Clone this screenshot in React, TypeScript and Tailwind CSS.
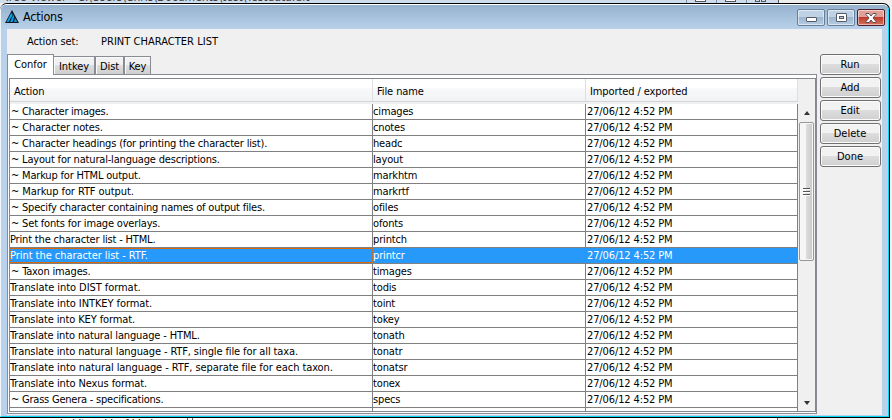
import type { ReactNode } from "react";

type Row = { action: string; file: string; tracking: string };

const rows: Row[] = [
  { action: "~ Character images.", file: "cimages", tracking: "pl-px tracking-[-0.28px]" },
  { action: "~ Character notes.", file: "cnotes", tracking: "pl-px tracking-[-0.12px]" },
  { action: "~ Character headings (for printing the character list).", file: "headc", tracking: "pl-px tracking-[-0.17px]" },
  { action: "~ Layout for natural-language descriptions.", file: "layout", tracking: "pl-px tracking-[-0.18px]" },
  { action: "~ Markup for HTML output.", file: "markhtm", tracking: "pl-px tracking-[-0.19px]" },
  { action: "~ Markup for RTF output.", file: "markrtf", tracking: "pl-px tracking-[-0.08px]" },
  { action: "~ Specify character containing names of output files.", file: "ofiles", tracking: "pl-px tracking-[-0.2px]" },
  { action: "~ Set fonts for image overlays.", file: "ofonts", tracking: "pl-px tracking-[-0.17px]" },
  { action: "Print the character list - HTML.", file: "printch", tracking: "tracking-[-0.17px]" },
  { action: "Print the character list - RTF.", file: "printcr", tracking: "tracking-[-0.05px]" },
  { action: "~ Taxon images.", file: "timages", tracking: "pl-px tracking-[-0.15px]" },
  { action: "Translate into DIST format.", file: "todis", tracking: "tracking-[-0.06px]" },
  { action: "Translate into INTKEY format.", file: "toint", tracking: "tracking-[-0.08px]" },
  { action: "Translate into KEY format.", file: "tokey", tracking: "tracking-[-0.12px]" },
  { action: "Translate into natural language - HTML.", file: "tonath", tracking: "tracking-[-0.14px]" },
  { action: "Translate into natural language - RTF, single file for all taxa.", file: "tonatr", tracking: "tracking-[-0.12px]" },
  { action: "Translate into natural language - RTF, separate file for each taxon.", file: "tonatsr", tracking: "tracking-[-0.08px]" },
  { action: "Translate into Nexus format.", file: "tonex", tracking: "tracking-[-0.1px]" },
  { action: "~ Grass Genera - specifications.", file: "specs", tracking: "pl-px tracking-[-0.22px]" },
  { action: "~ Grass Genera - character list.", file: "chars", tracking: "pl-px tracking-[-0.2px]" },
];

const selected = 9;

function WindowButton({ close, children }: { close?: boolean; children: ReactNode }) {
  return (
    <div
      className={
        "flex h-[17px] w-7 items-center justify-center rounded-[2px] border shadow-[inset_0_0_0_1px_rgba(255,255,255,0.5)] " +
        (close
          ? "border-[#51202a] bg-linear-to-b from-[#e0a098] from-45% via-[#c13a2b] via-50% to-[#d5705c]"
          : "border-[#687f98] bg-linear-to-b from-[#bfd2e5] from-45% via-[#9db6cf] via-50% to-[#b4cde4]")
      }
    >
      {children}
    </div>
  );
}

function Tab({ label, width }: { label: string; width: string }) {
  return (
    <div
      className={
        "flex h-[18px] items-center justify-center border border-b-0 border-[#898c95] bg-linear-to-b from-[#f1f1f1] from-45% via-[#dedede] via-50% to-[#cfcfcf] pt-px shadow-[inset_1px_1px_0_#fafafa] " +
        width
      }
    >
      {label}
    </div>
  );
}

function PushButton({ label }: { label: string }) {
  return (
    <div className="flex h-[21px] w-[61px] items-center justify-center rounded-[3px] border border-[#707070] bg-linear-to-b from-[#f2f2f2] from-45% via-[#dddddd] via-50% to-[#cfcfcf] pr-px pb-px shadow-[inset_0_0_0_1px_#fbfbfb]">
      {label}
    </div>
  );
}

export default function App() {
  return (
    <div className="flex h-[420px] w-[892px] flex-col overflow-hidden bg-[#f0f0f0] font-['DejaVu_Sans_Condensed','DejaVu_Sans',sans-serif] text-[11px] leading-[15px] whitespace-pre text-black [font-stretch:condensed]">
      {/* Strip of the window behind */}
      <div className="flex h-[3px] shrink-0 overflow-hidden bg-[#eeeeee]">
        <div className="flex h-[3px] w-[779px] overflow-hidden border-r border-[#555] bg-[#cfdcec]">
          <div className="-mt-[10px] ml-1 w-[682px] text-[12px] leading-[14px] text-[#444]">
            Tree Viewer - C:\Users\Chris\Documents\test\Testdata.dlt
          </div>
          <div className="flex gap-[2px]">
            <div className="flex w-7 justify-center border-l border-[#8796aa]"><div className="h-[2px] w-[11px] border border-t-0 border-[#555] bg-white" /></div>
            <div className="flex w-7 justify-center border-l border-[#8796aa]"><div className="h-[2px] w-[11px] border border-t-0 border-[#555] bg-white" /></div>
            <div className="flex w-7 justify-center gap-px border-l border-[#8796aa]"><div className="h-[2px] w-[5px] border border-t-0 border-[#555]" /><div className="h-[2px] w-[5px] border border-t-0 border-[#555]" /></div>
          </div>
        </div>
      </div>

      {/* Actions window */}
      <div className="flex h-[415px] w-[890px] shrink-0 flex-col overflow-hidden rounded-t-[7px] border-t border-r border-b border-black bg-[#b9d1ea]">
        <div className="flex h-[413px] flex-col overflow-hidden rounded-t-[6px] border-t border-r border-b border-l border-t-white border-r-[#00d8f4] border-b-[#00d8f4] border-l-[#f2f7fc]">
          <div className="flex h-6 shrink-0 bg-linear-to-b from-[#95b2ce] to-[#b9d1ea] pl-1">
            <svg width="14" height="14" viewBox="0 0 14 14" className="mt-[5px]">
              <path d="M7 0L14 13H0Z" fill="#101820" />
              <path d="M6.2 3L7.8 5L3.5 12H1.5Z" fill="#08a0e8" />
              <path d="M8.3 5L9.2 7L7.5 12H5Z" fill="#08a0e8" />
              <path d="M10 8L12.3 12H9Z" fill="#168fd0" />
            </svg>
            <span className="mt-1 ml-1 w-[774px] text-[12.5px] leading-4 tracking-[-0.2px]">Actions</span>
            <div className="mt-1 flex gap-[2px]">
              <WindowButton>
                <div className="mt-[3px] h-[5px] w-[11px] rounded-[1px] border border-[#555b66] bg-white" />
              </WindowButton>
              <WindowButton>
                <div className="flex h-[9px] w-[11px] items-center justify-center rounded-[1px] border border-[#555b66] bg-white">
                  <div className="h-[3px] w-[5px] border border-[#555b66] bg-[#b4cde4]" />
                </div>
              </WindowButton>
              <WindowButton close>
                <svg width="12" height="10" viewBox="0 0 12 10">
                  <path d="M1 .5H4L6 3L8 .5H11V1.5L8 5L11 8.5V9.5H8L6 7L4 9.5H1V8.5L4 5L1 1.5Z" fill="white" stroke="#594c55" />
                </svg>
              </WindowButton>
            </div>
          </div>

          <div className="mr-[6px] ml-[6px] flex h-[386px] shrink-0 bg-[#f0f0f0]">
            <div className="flex w-[810px] flex-col">
              <div className="flex h-[25px] shrink-0 items-start pt-[5px] pl-5">
                <span className="w-[74px] tracking-[-0.1px]">Action set:</span>
                <span className="tracking-[0.03px]">PRINT CHARACTER LIST</span>
              </div>

              <div className="z-10 flex h-5 shrink-0 items-end tracking-[-0.05px]">
                <div className="-mb-px flex h-[21px] w-[47px] items-center justify-center border border-b-0 border-[#898c95] bg-white pb-px">
                  Confor
                </div>
                <div className="flex h-[18px]">
                  <Tab label="Intkey" width="w-[41px] border-l-0" />
                  <Tab label="Dist" width="w-[29px]" />
                  <Tab label="Key" width="w-[27px]" />
                </div>
              </div>

              <div className="h-[340px] shrink-0 border border-[#898c95] bg-white pt-[3px] pb-px pl-px">
                <div className="flex h-[334px] border border-[#828790] bg-white">
                  <div className="flex w-[788px] shrink-0 flex-col overflow-hidden">
                    <div className="flex h-[23px] shrink-0 items-center border-b border-[#d5d5d5] bg-linear-to-b from-white from-40% via-[#f7f8fa] via-45% to-[#f1f2f4] tracking-[-0.1px]">
                      <div className="h-[22px] w-[363px] border-r border-[#dedfe1] pt-[5px] pl-1">Action</div>
                      <div className="h-[22px] w-[213px] border-r border-[#dedfe1] pt-[5px] pl-1">File name</div>
                      <div className="h-[22px] w-[212px] border-r border-[#dedfe1] pt-[5px] pl-1">Imported / exported</div>
                    </div>
                    <div className="h-[2px] shrink-0 bg-[#f0f0f0]" />
                    {rows.map((row, i) => (
                      <div
                        key={row.file}
                        className={
                          "flex h-4 shrink-0 border-b border-[#808080] " +
                          (i === selected ? "bg-[#2699fb] text-white" : "bg-white")
                        }
                      >
                        <div
                          className={
                            "h-[15px] w-[363px] border-r border-[#808080] " +
                            row.tracking +
                            (i === selected ? " outline-1 -outline-offset-1 outline-dotted outline-[#d96604]" : "")
                          }
                        >
                          {row.action}
                        </div>
                        <div className="w-[213px] border-r border-[#808080] tracking-[-0.15px]">{row.file}</div>
                        <div className="w-[212px] border-r border-[#808080] pl-px tracking-[-0.12px]">27/06/12 4:52 PM</div>
                      </div>
                    ))}
                  </div>
                  <div className="flex w-[17px] flex-col bg-[#f0f0f0]">
                    <div className="h-[25px]" />
                    <div className="flex h-[18px] items-center justify-center">
                      <div className="h-0 w-0 border-x-[3.5px] border-b-4 border-x-transparent border-b-[#333]" />
                    </div>
                    <div className="ml-px flex h-[139px] w-[15px] items-center justify-center rounded-[2px] border border-[#979797] bg-linear-to-r from-[#f5f5f5] from-45% via-[#dcdcdc] via-50% to-[#c8c8c8] shadow-[inset_0_0_0_1px_#f8f8f8]">
                      <div className="flex flex-col gap-px">
                        <div className="h-[2px] w-[7px] border-b border-white bg-[#555]" />
                        <div className="h-[2px] w-[7px] border-b border-white bg-[#555]" />
                        <div className="h-[2px] w-[7px] border-b border-white bg-[#555]" />
                      </div>
                    </div>
                    <div className="flex-1" />
                    <div className="flex h-[17px] items-center justify-center">
                      <div className="h-0 w-0 border-x-[3.5px] border-t-4 border-x-transparent border-t-[#333]" />
                    </div>
                  </div>
                </div>
              </div>
            </div>

            <div className="ml-[3px] flex flex-col gap-[2px] pt-[25px]">
              <PushButton label="Run" />
              <PushButton label="Add" />
              <PushButton label="Edit" />
              <PushButton label="Delete" />
              <PushButton label="Done" />
            </div>
          </div>
        </div>
      </div>

      {/* Strip of the window below */}
      <div className="flex h-[2px] shrink-0 overflow-hidden bg-white">
        <div className="-mt-[2px] w-[188px] border-r border-[#666] pl-[60px]">habit and leaf blade</div>
        <div className="ml-1 w-[586px] border-r border-l border-[#666]" />
        <div className="flex-1 bg-[#f0f0f0]" />
      </div>
    </div>
  );
}
